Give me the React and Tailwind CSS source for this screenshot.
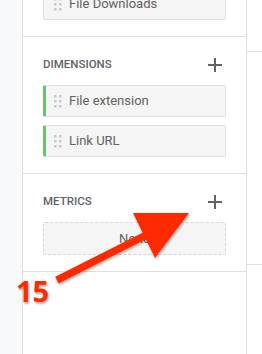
import React from "react";

function Handle() {
  const dots = [];
  for (let r = 0; r < 3; r++) {
    for (let c = 0; c < 2; c++) {
      dots.push(<rect key={r + "-" + c} x={c * 5} y={r * 5} width="2.5" height="2.5" fill="#c8c8c8" />);
    }
  }
  return (
    <svg width="8" height="13" viewBox="0 0 8 13" className="shrink-0">
      {dots}
    </svg>
  );
}

function Card({ label, accent }) {
  return (
    <div
      className={
        "h-[32px] flex items-center bg-[#f5f5f5] border border-[#e0e0e0] rounded-[2px] " +
        (accent ? "border-l-[3px] border-l-[#6fbf73] pl-[8px]" : "pl-[10px]")
      }
    >
      <Handle />
      <span className="ml-[7px] text-[13px] text-[#616161]">{label}</span>
    </div>
  );
}

function Plus() {
  return (
    <svg width="14" height="14" viewBox="0 0 14 14">
      <path d="M7 0v14M0 7h14" stroke="#5f6368" strokeWidth="2" />
    </svg>
  );
}

function Header({ title }) {
  return (
    <div className="h-6 mb-2 flex items-center justify-between">
      <span className="text-[11.5px] font-medium text-[#5f6368]">{title}</span>
      <span className="mr-[4px] flex"><Plus /></span>
    </div>
  );
}

export default function App() {
  return (
    <div
      className="relative w-[262px] h-[354px] overflow-hidden flex bg-white"
      style={{ fontFamily: "Roboto, 'Liberation Sans', sans-serif" }}
    >
      <div className="w-[23px] shrink-0 bg-[#f8f9fa] border-r border-[#dadce0]" />
      <div className="w-[224px] shrink-0 border-r border-[#e0e0e0] flex flex-col">
        <div className="-mt-[12px] px-5 pb-4">
          <Card label="File Downloads" />
        </div>
        <div className="border-t border-[#e0e0e0] px-5 pt-4 pb-4">
          <Header title="DIMENSIONS" />
          <div className="flex flex-col gap-2">
            <Card label="File extension" accent />
            <Card label="Link URL" accent />
          </div>
        </div>
        <div className="border-t border-[#e0e0e0] px-5 pt-4 pb-4">
          <Header title="METRICS" />
          <div className="h-[33px] flex items-center justify-center bg-[#f5f5f5] border border-dashed border-[#d6d6d6] rounded-[2px] text-[13px] text-[#616161]">
            None
          </div>
        </div>
        <div className="border-t border-[#e0e0e0] flex-1" />
      </div>
      <div className="flex-1 flex flex-col">
        <div className="h-[51px]" />
        <div className="border-t border-[#e0e0e0] h-[213px]" />
        <div className="border-t border-[#e0e0e0] flex-1" />
      </div>

      <svg className="absolute left-0 top-0 pointer-events-none" width="262" height="354" viewBox="0 0 262 354">
        <defs>
          <filter id="sh" x="-20%" y="-20%" width="140%" height="140%">
            <feDropShadow dx="1" dy="1.5" stdDeviation="1.2" floodColor="#000" floodOpacity="0.3" />
          </filter>
        </defs>
        <g filter="url(#sh)" fill="#ff2b00">
          <polygon points="55.2,276.8 144,232 147.3,238.6 58.6,283.4" />
          <polygon points="133,213 189,213 155,258" />
        </g>
      </svg>
      <div
        className="absolute left-[16px] top-[276px] text-[29px] font-bold leading-none text-[#ff2b00]"
        style={{ fontFamily: "'Open Sans', 'Liberation Sans', sans-serif", textShadow: "1px 1.5px 2px rgba(0,0,0,0.3)" }}
      >
        15
      </div>
    </div>
  );
}
